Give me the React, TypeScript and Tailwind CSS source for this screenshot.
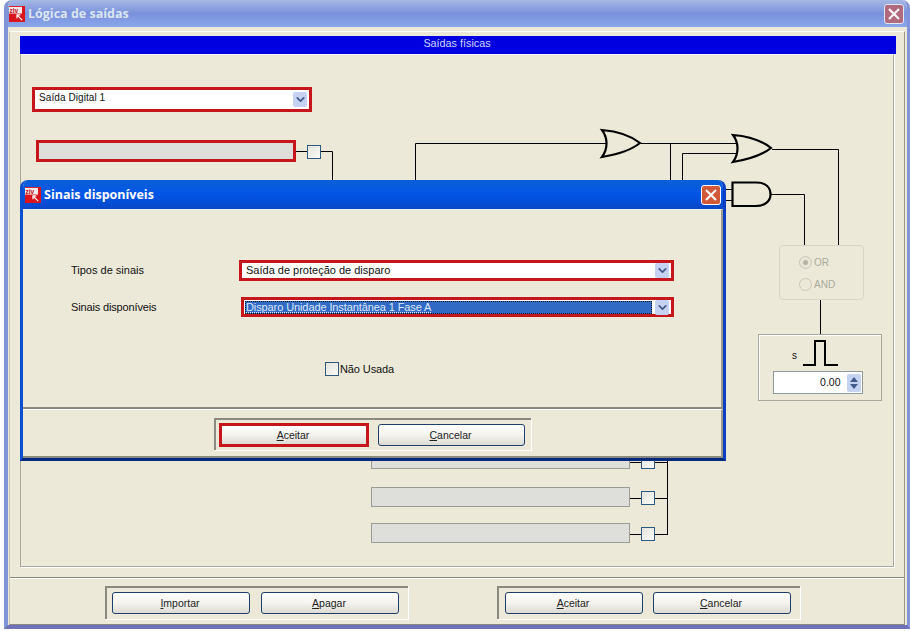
import { ChevronDown } from "lucide-react";

const Logo = () => (
  <svg width="16" height="16" viewBox="0 0 17 17" className="shrink-0">
    <rect width="17" height="17" fill="#d9141c" />
    <rect x="0" y="1" width="14" height="7" fill="#f4e8e8" />
    <text x="0.5" y="7" fontSize="7" fontWeight="700" fontFamily="'Liberation Sans', sans-serif" fill="#c01018">ziv</text>
    <path d="M14 15 L8.5 9.5 M8.5 13 V9.5 H12" stroke="#fff" strokeWidth="1.3" fill="none" />
    <rect x="14" y="1" width="3" height="7" fill="#d9141c" />
  </svg>
);

const Btn = ({ mark, rest, className = "" }: { mark: string; rest: string; className?: string }) => (
  <button className={`h-[22px] rounded-[3px] border border-[#1c3f6e] bg-gradient-to-b from-[#ffffff] via-[#f4f3ee] to-[#dcdcd4] pr-[2px] pt-[1px] text-[10.5px] text-[#222] ${className}`}>
    <span className="underline">{mark}</span>
    {rest}
  </button>
);

const Arrow = () => (
  <span className="flex h-[15px] w-[14px] shrink-0 items-center justify-center rounded-[2px] bg-[#c5d2f2]">
    <ChevronDown size={13} strokeWidth={3.2} className="text-[#44598c]" />
  </span>
);

const Wire = ({ className }: { className: string }) => (
  <div className={`absolute h-[14px] w-[14px] border border-[#2f5a80] bg-gradient-to-br from-[#e4e4dc] to-[#fbfbf8] ${className}`} />
);

const Field = ({ className }: { className: string }) => (
  <div className={`absolute h-[20px] w-[259px] border border-[#9a9d96] bg-[#dedfdb] ${className}`} />
);

const orGate = "c12 1 28 5 38 13 c-10 8 -26 12 -38 14 c6 -8 6 -19 0 -27 z";

const Diagram = () => (
  <svg
    className="absolute left-0 top-0"
    width="875"
    height="512"
    viewBox="20 54 875 512"
    fill="none"
    stroke="#000"
    strokeWidth="1"
  >
    <path d="M296 151.5H307M320 151.5H332.5V200M415.5 300V143.5H607M641 143.5H737M670.5 143.5V200M682.5 200V153.5H738M772 149.5H838.5V245M771 194.5H804.5V245M725 189.5H732M725 200.5H732M820.5 300V334" />
    <path d={`M602 130 ${orGate}`} strokeWidth="2.2" fill="#ece9d8" />
    <path d={`M733 135 ${orGate}`} strokeWidth="2.2" fill="#ece9d8" />
    <path d="M732.5 182.5H756C765 182.5 770.5 187 770.5 194.5C770.5 201 765 206 756 206H732.5Z" strokeWidth="2.2" fill="#ece9d8" />
    <path d="M630 498.5H641M654 498.5H667.5M630 534.5H641M654 534.5H667.5M667.5 450V535M630 462.5H641M654 462.5H667.5" />
  </svg>
);

export default function App() {
  return (
    <div className="relative h-[631px] w-[910px] overflow-hidden bg-white font-['Liberation_Sans',sans-serif] text-[11px] text-[#111]">
      <div className="ml-[4px] flex h-[629px] w-[906px] flex-col overflow-hidden rounded-t-[8px] border-b-[4px] border-l-[4px] border-r-[3px] border-b-[#6f72b8] border-x-[#8294d8] bg-[#ece9d8]">
        <div className="flex h-[27px] shrink-0 items-center gap-[3px] bg-gradient-to-b from-[#a5b7e4] via-[#7a92dc] to-[#8aa6ea] pl-[1px] pr-[3px]">
          <Logo />
          <span className="pt-[1px] font-['Open_Sans',sans-serif] text-[12.5px] font-bold text-[#dbe6f2]">Lógica de saídas</span>
          <span className="ml-auto flex h-[20px] w-[20px] items-center justify-center rounded-[3px] border border-[#e4e8f2] bg-[#b06a7e] text-white">
            <svg width="12" height="12" viewBox="0 0 12 12" stroke="#fff" strokeWidth="2">
              <path d="M1 1L11 11M11 1L1 11" />
            </svg>
          </span>
        </div>

        <div className="ml-[1px] mr-[2px] mt-[4px] flex min-h-0 flex-1 flex-col border-b border-l border-r border-t border-b-[#8a897e] border-l-[#c9c7b8] border-r-[#9c9b8e] border-t-white">
          <div className="flex h-[546px] shrink-0 flex-col pb-[11px] pl-[10px] pr-[10px] pt-[4px]">
            <div className="mr-[-2px] flex h-[18px] shrink-0 justify-center bg-[#0000e0] pr-[2px] pt-[1px] text-[10.8px] leading-[13px] text-[#cfd6f5]">
              Saídas físicas
            </div>
            <div className="relative flex-1 border-x border-b border-t border-x-[#a9a89c] border-b-[#a9a89c] border-t-[#f6f4ee] shadow-[1px_1px_0_#fff]">
              <div className="absolute left-[-1px] top-[-1px]">
                <Diagram />
                <div className="absolute left-[12px] top-[33px] flex h-[25px] w-[280px] items-center border-[3px] border-[#c6161b] bg-white pl-[4px] pr-[2px]">
                  <span className="flex-1 pb-[5px] text-[10px] tracking-[0.08px]">Saída Digital 1</span>
                  <Arrow />
                </div>
                <div className="absolute left-[16px] top-[86px] h-[22px] w-[260px] border-[3px] border-[#c6161b] bg-[#dedfdb]" />
                <Wire className="left-[287px] top-[91px]" />

                <Field className="left-[351px] top-[395px]" />
                <Field className="left-[351px] top-[433px]" />
                <Field className="left-[351px] top-[469px]" />
                <Wire className="left-[621px] top-[401px]" />
                <Wire className="left-[621px] top-[437px]" />
                <Wire className="left-[621px] top-[473px]" />

                <div className="absolute left-[759px] top-[191px] flex h-[55px] w-[85px] flex-col justify-center gap-[7px] rounded-[4px] border border-[#d8d5c4] pl-[19px] pt-[2px] text-[10px] text-[#aaa99a]">
                  <div className="flex items-center gap-[2px]">
                    <span className="flex h-[13px] w-[13px] items-center justify-center rounded-full border border-[#c9c7b8] bg-[#e8e5d6]">
                      <span className="h-[5px] w-[5px] rounded-full bg-[#b5b3a6]" />
                    </span>
                    OR
                  </div>
                  <div className="flex items-center gap-[2px]">
                    <span className="h-[13px] w-[13px] rounded-full border border-[#c9c7b8] bg-[#ece9d8]" />
                    AND
                  </div>
                </div>

                <div className="absolute left-[738px] top-[280px] flex h-[67px] w-[124px] flex-col items-center border border-[#a9a89c] bg-[#ece9d8] shadow-[inset_1px_1px_0_#fff]">
                  <div className="relative h-[36px] w-full">
                    <span className="absolute left-[33px] top-[13px] text-[10px]">s</span>
                    <svg className="absolute left-[44px] top-[5px]" width="36" height="27" fill="none" stroke="#000" strokeWidth="2">
                      <path d="M0 25H12V1H22V25H35" />
                    </svg>
                  </div>
                  <div className="ml-[-5px] flex h-[23px] w-[90px] items-center justify-end border border-[#8f9a9e] bg-white pr-[1px] text-[10.5px]">
                    <span className="mr-[6px]">0.00</span>
                    <span className="flex h-[18px] w-[14px] flex-col items-center justify-center gap-[2px] rounded-[2px] bg-[#c5d2f2]">
                      <svg width="8" height="5" fill="#44598c"><path d="M4 0L8 5H0Z" /></svg>
                      <svg width="8" height="5" fill="#44598c"><path d="M0 0H8L4 5Z" /></svg>
                    </span>
                  </div>
                </div>
              </div>
            </div>
          </div>

          <div className="flex flex-1 items-start gap-[89px] border-t border-t-white pl-[95px] pt-[7px] shadow-[0_-1px_0_#8a897e]">
            <div className="flex h-[33px] w-[303px] gap-[11px] border-l-2 border-t-2 border-l-[#8a897e] border-t-[#8a897e] pl-[5px] pt-[4px] shadow-[1px_1px_0_#fff]">
              <Btn mark="I" rest="mportar" className="w-[138px]" />
              <Btn mark="A" rest="pagar" className="w-[138px]" />
            </div>
            <div className="flex h-[33px] w-[303px] gap-[10px] border-l-2 border-t-2 border-l-[#8a897e] border-t-[#8a897e] pl-[6px] pt-[4px] shadow-[1px_1px_0_#fff]">
              <Btn mark="A" rest="ceitar" className="w-[138px]" />
              <Btn mark="C" rest="ancelar" className="w-[138px]" />
            </div>
          </div>
        </div>
      </div>

      <div className="absolute left-[20px] top-[180px] flex h-[281px] w-[706px] flex-col overflow-hidden rounded-t-[8px] border-b-[3px] border-x-[3px] border-b-[#00287c] border-l-[#0a4fd0] border-r-[#0a3fc4] bg-[#ece9d8]">
        <div className="flex h-[29px] shrink-0 items-center gap-[3px] bg-gradient-to-b from-[#0a5fd8] via-[#0355e6] to-[#0847c8] pl-[2px] pr-[2px]">
          <Logo />
          <span className="pt-[2px] font-['Open_Sans',sans-serif] text-[12.5px] font-bold text-white">Sinais disponíveis</span>
          <span className="ml-auto flex h-[20px] w-[20px] items-center justify-center rounded-[3px] border border-white bg-[#d2583a]">
            <svg width="12" height="12" viewBox="0 0 12 12" stroke="#fff" strokeWidth="2">
              <path d="M1 1L11 11M11 1L1 11" />
            </svg>
          </span>
        </div>

        <div className="flex h-[200px] shrink-0 flex-col border-b-2 border-r-2 border-t border-b-[#8a897e] border-r-[#9c9b8e] border-t-[#e8f2ee] pl-[48px] pt-[50px]">
          <div className="flex h-[21px] items-center">
            <span className="w-[168px] shrink-0">Tipos de sinais</span>
            <div className="flex h-[21px] w-[435px] items-center border-[3px] border-[#c6161b] bg-white pl-[4px] pr-[2px]">
              <span className="flex-1">Saída de proteção de disparo</span>
              <Arrow />
            </div>
          </div>
          <div className="mt-[16px] flex h-[20px] items-center">
            <span className="w-[170px] shrink-0 tracking-[-0.15px]">Sinais disponíveis</span>
            <div className="flex h-[20px] w-[433px] items-center border-[3px] border-[#c6161b] bg-white pl-[1px] pr-[2px]">
              <div className="mr-[3px] h-[13px] flex-1 border border-dotted border-[#111] bg-[#316ac5] leading-[11px] tracking-[-0.1px] text-[#dce8f8]">
                <span className="underline decoration-dotted">Disparo Unidade Instantânea 1 Fase A</span>
              </div>
              <Arrow />
            </div>
          </div>
          <div className="ml-[254px] mt-[44px] flex items-center gap-[1px] tracking-[-0.1px]">
            <span className="h-[14px] w-[14px] border border-[#2f5a80] bg-gradient-to-br from-[#e4e4dc] to-[#fbfbf8]" />
            Não Usada
          </div>
        </div>

        <div className="flex flex-1 border-b-2 border-r-2 border-t border-b-[#8a897e] border-r-[#9c9b8e] border-t-white pl-[191px] pt-[8px]">
          <div className="flex h-[32px] w-[317px] items-start gap-[9px] border-l-2 border-t-2 border-l-[#8a897e] border-t-[#8a897e] pl-[3px] pt-[3px] shadow-[1px_1px_0_#fff]">
            <Btn mark="A" rest="ceitar" className="!h-[24px] w-[150px] !rounded-none !border-[3px] !border-[#c6161b]" />
            <Btn mark="C" rest="ancelar" className="mt-[1px] w-[147px]" />
          </div>
        </div>
      </div>
    </div>
  );
}
